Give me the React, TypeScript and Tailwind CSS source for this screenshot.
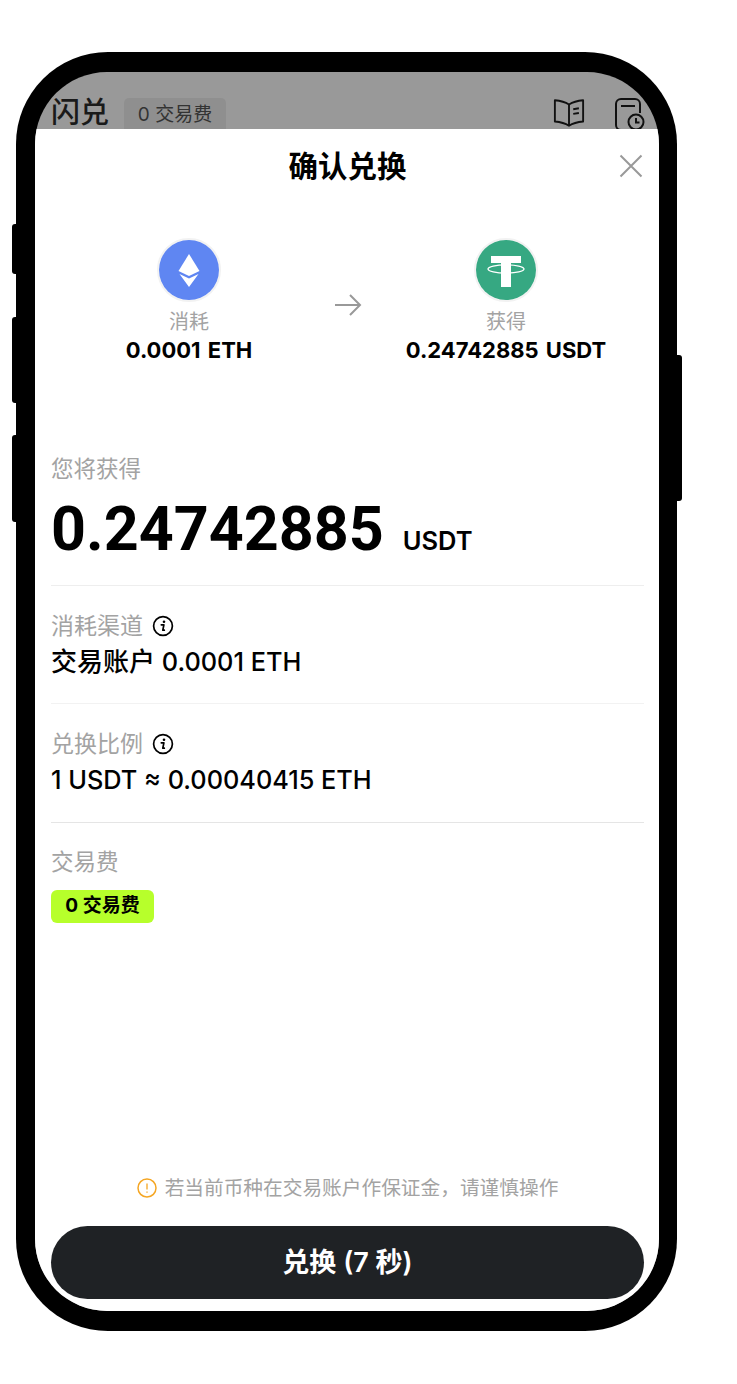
import type { ReactNode } from "react";

const sans = '[font-family:Inter,"Noto_Sans_CJK_SC",sans-serif]'

const InfoIcon = () => (
    <svg width="22" height="22" viewBox="0 0 22 22" fill="none" className="shrink-0">
        <circle cx="11" cy="11" r="9.4" stroke="#000" strokeWidth="1.7" />
        <circle cx="12" cy="6.7" r="1.3" fill="#000" />
        <path d="M9.3 9.8h2.6l-1.1 5.4h1.5" stroke="#000" strokeWidth="1.7" strokeLinecap="round" strokeLinejoin="round" />
    </svg>
)

const BookIcon = () => (
    <svg width="32" height="32" viewBox="0 0 34 32" fill="none">
        <path d="M17 7C13 4.5 7 3 2 2.5v22.5c5 .5 11 2 15 4.5 4-2.500 10-4 15-4.500V2.500C27 3 21 4.500 17 7Z" stroke="#111" strokeWidth="2" strokeLinejoin="round" />
        <path d="M17 7v22.500M21.500 12l6-1M21.500 17l6-1" stroke="#111" strokeWidth="2" />
    </svg>
)

const HistoryIcon = () => (
    <svg width="32" height="36" viewBox="0 0 32 36" fill="none">
        <path d="M13 33H7a5 5 0 0 1-5-5V7a5 5 0 0 1 5-5h14a5 5 0 0 1 5 5v9" stroke="#111" strokeWidth="2" />
        <path d="M7 9h14" stroke="#111" strokeWidth="2" />
        <circle cx="22" cy="25" r="7.500" stroke="#111" strokeWidth="2" fill="#999" />
        <path d="M22 21v4.500h3.500" stroke="#111" strokeWidth="2" />
    </svg>
)

const EthCoin = () => (
    <div className="w-[64px] h-[64px] rounded-full border-2 border-[#f2f2f2] flex items-center justify-center bg-white">
        <svg width="60" height="60" viewBox="0 0 60 60">
            <circle cx="30" cy="30" r="30" fill="#5f86f2" />
            <path d="M30 14 19.500 31 30 36l10.500-5Z" fill="#fff" />
            <path d="M20.500 34 30 38.500l9.500-4.500L30 47Z" fill="#fff" />
        </svg>
    </div>
)

const UsdtCoin = () => (
    <div className="w-[64px] h-[64px] rounded-full border-2 border-[#f2f2f2] flex items-center justify-center bg-white">
        <svg width="60" height="60" viewBox="0 0 60 60">
            <circle cx="30" cy="30" r="30" fill="#36a882" />
            <path d="M15 16h30v7H35v24H25V23H15Z" fill="#fff" />
            <ellipse cx="30" cy="29" rx="18" ry="4.200" fill="none" stroke="#fff" strokeWidth="1.300" />
        </svg>
    </div>
)

const Row = ({ label, children }: { label: string; children: ReactNode }) => (
    <div>
        <div className="flex items-center gap-[9px] h-[24px]">
            <span className="text-[23px] leading-[24px] text-[#a3a3a3]">{label}</span>
            <InfoIcon />
        </div>
        <div className="mt-[9px] text-[25.300px] leading-[30px] font-medium text-black">{children}</div>
    </div>
)

export default function App() {
    return (
        <div className={`min-h-[1384px] bg-white pt-[52px] pl-[16px] ${sans}`}>
            <div className="relative w-[661px] h-[1279px]">
                {/* side buttons */}
                <div className="absolute left-[-4px] top-[172px] w-[5px] h-[50px] bg-black rounded-l-[3px]"></div>
                <div className="absolute left-[-4px] top-[265px] w-[5px] h-[86px] bg-black rounded-l-[3px]"></div>
                <div className="absolute left-[-4px] top-[383px] w-[5px] h-[87px] bg-black rounded-l-[3px]"></div>
                <div className="absolute right-[-5px] top-[303px] w-[6px] h-[146px] bg-black rounded-r-[3px]"></div>

                <div className="relative h-full rounded-[92px] bg-black pt-[20px] pb-[20px] pl-[19px] pr-[18px]">
                    <div className="h-full rounded-[72px] overflow-hidden bg-[#999999] flex flex-col">
                        {/* page behind the sheet */}
                        <div className="h-[57px] shrink-0 overflow-hidden flex items-end pl-[16px]">
                            <span className="text-[29px] leading-[33px] font-medium text-[#1a1a1a]">闪兑</span>
                            <span className="ml-[15px] h-[31px] w-[102px] pt-[3px] rounded-t-[5px] bg-[#8f8f8f] flex items-center justify-center text-[19px] text-[#333333]">0 交易费</span>
                            <div className="ml-auto mr-[13px] flex items-start gap-[29px] h-[32px]">
                                <BookIcon />
                                <HistoryIcon />
                            </div>
                        </div>

                        {/* confirm sheet */}
                        <div className="flex-1 bg-white flex flex-col pl-[16px] pr-[15px] pb-[12px]">
                            <div className="relative flex items-center justify-center h-[74px]">
                                <h1 className="text-[29.500px] font-bold text-black">确认兑换</h1>
                                <svg className="absolute right-[1px] top-[25px]" width="24" height="24" viewBox="0 0 24 24" fill="none">
                                    <path d="M1.500 1.500l21 21M22.500 1.500l-21 21" stroke="#999" strokeWidth="2" />
                                </svg>
                            </div>

                            <div className="grid grid-cols-[276px_1fr_276px] mt-[35px]">
                                <div className="flex flex-col items-center">
                                    <EthCoin />
                                    <span className="mt-[8px] text-[20px] leading-[24px] text-[#a3a3a3]">消耗</span>
                                    <span className="mt-[1px] text-[22px] leading-[30px] font-bold text-black [word-spacing:2px]">0.0001 ETH</span>
                                </div>
                                <div className="flex justify-center pt-[55px]">
                                    <svg width="28" height="24" viewBox="0 0 28 24" fill="none">
                                        <path d="M1 12h25M16 2l10 10-10 10" stroke="#999" strokeWidth="2" />
                                    </svg>
                                </div>
                                <div className="flex flex-col items-center">
                                    <UsdtCoin />
                                    <span className="mt-[8px] text-[20px] leading-[24px] text-[#a3a3a3]">获得</span>
                                    <span className="mt-[1px] text-[22px] leading-[30px] font-bold text-black whitespace-nowrap [word-spacing:2px]">0.24742885 USDT</span>
                                </div>
                            </div>

                            <div className="mt-[91px] text-[22.500px] leading-[26px] text-[#a3a3a3]">您将获得</div>
                            <div className="mt-[12px] flex items-baseline gap-[19px] text-black">
                                <span className="text-[61px] leading-[70px] font-bold [font-family:Roboto,sans-serif]">0.24742885</span>
                                <span className="text-[25.500px] font-semibold">USDT</span>
                            </div>

                            <div className="mt-[21px] h-px bg-[#eeeeee]"></div>
                            <div className="mt-[28px]">
                                <Row label="消耗渠道"><span className="text-[26px]">交易账户</span> 0.0001 ETH</Row>
                            </div>
                            <div className="mt-[26px] h-px bg-[#f2f2f2]"></div>
                            <div className="mt-[28px]">
                                <Row label="兑换比例">1 USDT ≈ 0.00040415 ETH</Row>
                            </div>
                            <div className="mt-[27px] h-px bg-[#e5e5e5]"></div>

                            <div className="mt-[26px] text-[22.500px] leading-[26px] text-[#a3a3a3]">交易费</div>
                            <div className="mt-[15px] w-[103px] h-[33px] rounded-[6px] bg-[#b7ff2b] flex items-center justify-center text-[19px] font-bold text-black">0 交易费</div>

                            <div className="mt-auto flex items-center justify-center gap-[8px] text-[19.700px] leading-[26px] text-[#a3a3a3]">
                                <svg width="20" height="20" viewBox="0 0 20 20" fill="none">
                                    <circle cx="10" cy="10" r="9" stroke="#f5a623" strokeWidth="1.500" />
                                    <path d="M10 5.500v6M10 13.500v1.200" stroke="#f5a623" strokeWidth="1.300" />
                                </svg>
                                <span>若当前币种在交易账户作保证金，请谨慎操作</span>
                            </div>
                            <button className="mt-[25px] h-[73px] pt-[2px] rounded-full bg-[#1f2225] text-white text-[27px] font-semibold">兑换 (7 秒)</button>
                        </div>
                    </div>
                </div>
            </div>
        </div>
    )
}
